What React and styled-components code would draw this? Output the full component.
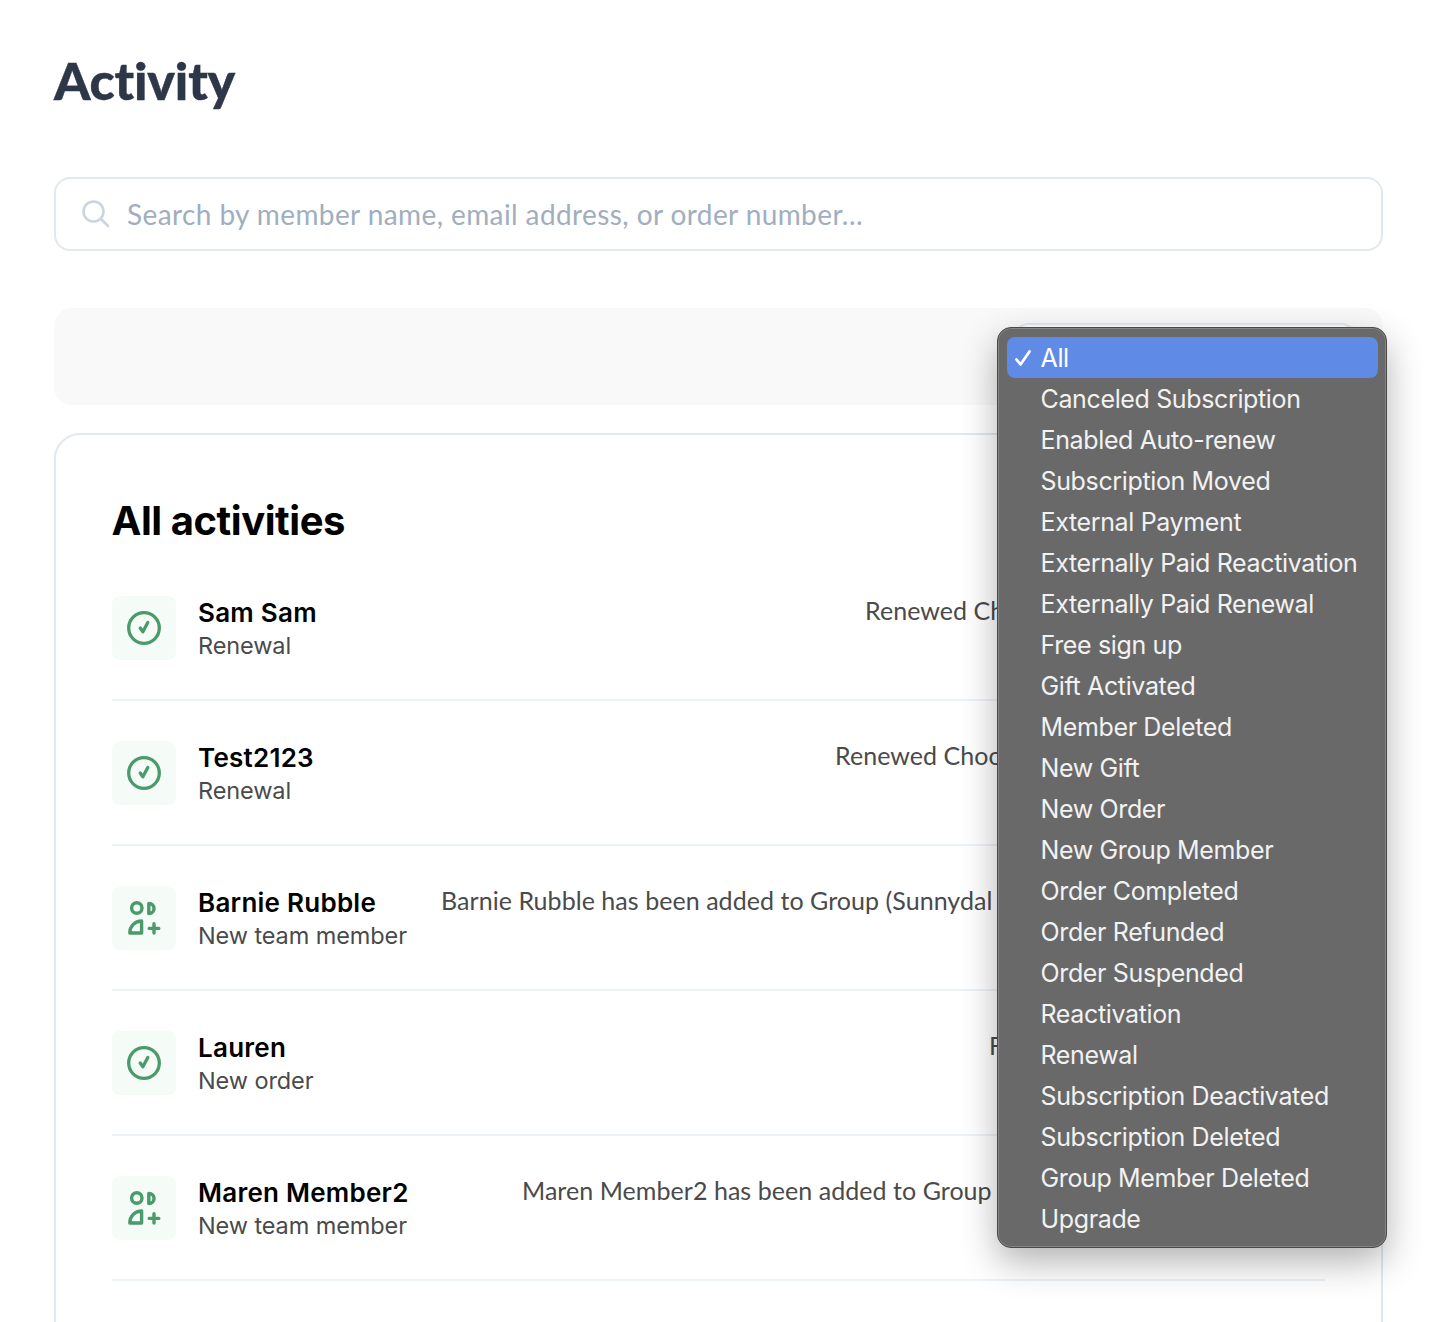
import React from "react";
import styled, { createGlobalStyle } from "styled-components";

const Global = createGlobalStyle`
  html, body { margin: 0; padding: 0; background: #fff; }
  body { font-family: "Inter", "Liberation Sans", sans-serif; }
  #root { height: 1322px; overflow: hidden; }
  * { box-sizing: border-box; }
`;

const Page = styled.main`
  padding: 47px 57px 0 54px;
  height: 1322px;
  overflow: hidden;
`;

const Title = styled.h1`
  margin: 0;
  font-family: "Lato", sans-serif;
  font-weight: 900;
  font-size: 52px;
  line-height: 66px;
  color: #2d3748;
  letter-spacing: -0.2px;
  -webkit-text-stroke: 0.4px #2d3748;
`;

const SearchBox = styled.div`
  margin-top: 64px;
  height: 74px;
  border: 2px solid #e2e8f0;
  border-radius: 16px;
  display: flex;
  align-items: center;
  padding-left: 26px;
  gap: 17px;
  background: #fff;
`;

const SearchText = styled.span`
  font-family: "Lato", sans-serif;
  font-size: 28px;
  letter-spacing: 0.4px;
  color: #a0aec0;
  white-space: nowrap;
`;

const FilterBar = styled.div`
  position: relative;
  margin-top: 57px;
  height: 97px;
  border-radius: 18px;
  background: #f9f9f9;
`;

const SelectBehind = styled.div`
  position: absolute;
  right: 26px;
  top: 15px;
  width: 344px;
  height: 66px;
  border: 2px solid #e2e8f0;
  border-radius: 16px;
  background: #fff;
`;

const Menu = styled.ul`
  position: absolute;
  left: 943px;
  top: 19px;
  width: 390px;
  height: 921px;
  margin: 0;
  padding: 9px 8px 0 9px;
  list-style: none;
  background: #696969;
  border: 1.5px solid #4a4a4a;
  box-shadow: inset 0 0 0 1px #858585, 0 14px 36px rgba(0, 0, 0, 0.3);
  border-radius: 14px;
  z-index: 5;
`;

const MenuItem = styled.li`
  position: relative;
  height: 41px;
  padding-left: 33.5px;
  display: flex;
  align-items: center;
  border-radius: 8px;
  font-size: 25px;
  letter-spacing: -0.36px;
  color: ${(p) => (p.$selected ? "#ffffff" : "#f2f2f2")};
  background: ${(p) => (p.$selected ? "#5f8ae6" : "transparent")};
  white-space: nowrap;
`;

const Tick = styled.svg`
  position: absolute;
  left: 7px;
  top: 12px;
  width: 18px;
  height: 18px;
`;

const Card = styled.section`
  margin-top: 28px;
  height: 1000px;
  border: 2px solid #e2e8f0;
  border-radius: 26px;
  padding: 57px 56px 0;
  background: #fff;
`;

const CardTitle = styled.h2`
  margin: 0 0 46px -0.5px;
  font-size: 40px;
  line-height: 58px;
  font-weight: 700;
  letter-spacing: -0.45px;
  color: #000;
`;

const Row = styled.div`
  display: flex;
  align-items: flex-start;
  height: ${(p) => (p.$first ? "105px" : "145px")};
  padding-top: ${(p) => (p.$first ? "0" : "40px")};
  border-bottom: 2px solid #edf2f7;
`;

const IconTile = styled.div`
  flex: none;
  width: 64px;
  height: 64px;
  border-radius: 8px;
  background: #f5fbf7;
  display: flex;
  align-items: center;
  justify-content: center;
  margin-right: 22px;
`;

const Who = styled.div`
  display: flex;
  flex-direction: column;
`;

const Name = styled.div`
  font-size: 26px;
  line-height: 34px;
  font-weight: 600;
  color: #000;
  white-space: nowrap;
  letter-spacing: 0.25px;
`;

const Kind = styled.div`
  font-size: 23.5px;
  line-height: 32px;
  color: #4a4a4a;
  white-space: nowrap;
  letter-spacing: -0.1px;
`;

const Desc = styled.div`
  margin-left: auto;
  width: ${(p) => p.$width}px;
  margin-top: -2px;
  font-family: "Lato", sans-serif;
  font-size: 25px;
  line-height: 32px;
  letter-spacing: 0.05px;
  color: #4a4a4a;
  white-space: nowrap;
  overflow: hidden;
`;

const CheckIcon = () => (
  <svg width="40" height="40" viewBox="0 0 40 40" fill="none" stroke="#4b9b6a" strokeWidth="3.3" strokeLinecap="round" strokeLinejoin="round">
    <circle cx="20" cy="20" r="15.3" />
    <path d="M16.2 20l2.7 3.8 4.9-9.3" />
  </svg>
);

const TeamIcon = () => (
  <svg width="64" height="64" viewBox="0 0 64 64" fill="none" stroke="#4b9b6a" strokeWidth="3.4" strokeLinecap="round" strokeLinejoin="round">
    <circle cx="24.8" cy="22" r="5.2" />
    <path d="M36.8 17.5c3.2 0 5.2 2.2 5.2 5s-2 5-5.2 5z" />
    <path d="M17.8 47C17.8 40 23 35 29.6 35V47z" />
    <path d="M42 37.7v9.4M37.2 42.4h9.6" />
  </svg>
);

const SearchIcon = () => (
  <svg width="28" height="28" viewBox="0 0 28 28" fill="none" stroke="#cbd5e0" strokeWidth="2.6" strokeLinecap="round">
    <circle cx="11.5" cy="11.5" r="10" />
    <path d="M19 19l7 7" />
  </svg>
);

const options = [
  "All", "Canceled Subscription", "Enabled Auto-renew", "Subscription Moved", "External Payment",
  "Externally Paid Reactivation", "Externally Paid Renewal", "Free sign up", "Gift Activated",
  "Member Deleted", "New Gift", "New Order", "New Group Member", "Order Completed", "Order Refunded",
  "Order Suspended", "Reactivation", "Renewal", "Subscription Deactivated", "Subscription Deleted",
  "Group Member Deleted", "Upgrade",
];

const rows = [
  { name: "Sam Sam", kind: "Renewal", icon: "check", desc: "Renewed Ch", width: 460 },
  { name: "Test2123", kind: "Renewal", icon: "check", desc: "Renewed Choc", width: 490 },
  { name: "Barnie Rubble", kind: "New team member", icon: "team", desc: "Barnie Rubble has been added to Group (Sunnydal", width: 884 },
  { name: "Lauren", kind: "New order", icon: "check", desc: "F", width: 336 },
  { name: "Maren Member2", kind: "New team member", icon: "team", desc: "Maren Member2 has been added to Group", width: 803 },
];

export default function App() {
  return (
    <Page>
      <Global />
      <Title>Activity</Title>
      <SearchBox>
        <SearchIcon />
        <SearchText>Search by member name, email address, or order number...</SearchText>
      </SearchBox>
      <FilterBar>
        <SelectBehind />
        <Menu>
          {options.map((o, i) => (
            <MenuItem key={o} $selected={i === 0}>
              {i === 0 && (
                <Tick viewBox="0 0 18 18" fill="none" stroke="#fff" strokeWidth="2.8" strokeLinecap="round" strokeLinejoin="round">
                  <path d="M2.5 10.5l4 5L15.5 2.5" />
                </Tick>
              )}
              {o}
            </MenuItem>
          ))}
        </Menu>
      </FilterBar>
      <Card>
        <CardTitle>All activities</CardTitle>
        {rows.map((r, i) => (
          <Row key={r.name} $first={i === 0}>
            <IconTile>{r.icon === "check" ? <CheckIcon /> : <TeamIcon />}</IconTile>
            <Who>
              <Name>{r.name}</Name>
              <Kind>{r.kind}</Kind>
            </Who>
            <Desc $width={r.width}>{r.desc}</Desc>
          </Row>
        ))}
      </Card>
    </Page>
  );
}
